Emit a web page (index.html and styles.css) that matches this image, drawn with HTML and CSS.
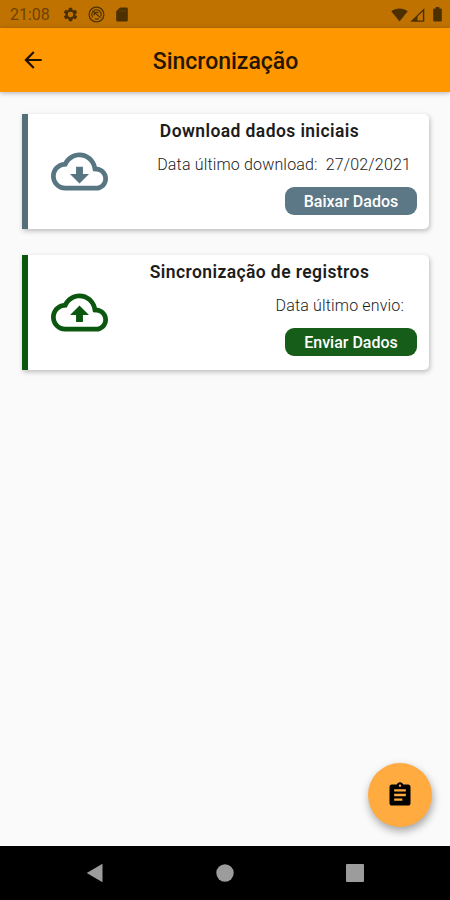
FILE: index.html
```html
<!DOCTYPE html>
<html lang="pt-BR">
<head>
  <meta charset="UTF-8">
  <meta name="viewport" content="width=device-width, initial-scale=1">
  <title>Sincronização</title>
  <link rel="stylesheet" href="styles.css">
</head>
<body>
  <!-- Status Bar -->
  <div class="status-bar">
    <span class="clock">21:08</span>
    <svg class="status-gear" width="17" height="17" viewBox="0 0 24 24"><path fill-rule="evenodd" d="M19.14 12.94c.04-.3.06-.61.06-.94s-.02-.64-.07-.94l2.03-1.58a.5.5 0 0 0 .12-.61l-1.92-3.32a.5.5 0 0 0-.59-.22l-2.39.96a7 7 0 0 0-1.62-.94l-.36-2.54A.48.48 0 0 0 13.92 2.4h-3.84a.48.48 0 0 0-.48.41l-.36 2.54a7 7 0 0 0-1.62.94l-2.39-.96a.5.5 0 0 0-.59.22L2.74 8.87a.48.48 0 0 0 .12.61l2.03 1.58a6 6 0 0 0 0 1.88l-2.03 1.58a.5.5 0 0 0-.12.61l1.92 3.32c.12.22.37.29.59.22l2.39-.96c.5.38 1.03.7 1.62.94l.36 2.54c.05.24.24.41.48.41h3.84c.24 0 .44-.17.48-.41l.36-2.54a7 7 0 0 0 1.62-.94l2.39.96c.22.08.47 0 .59-.22l1.92-3.32a.5.5 0 0 0-.12-.61zM12 15.8a3.8 3.8 0 1 1 0-7.6 3.8 3.8 0 0 1 0 7.6z"/></svg>
    <svg class="status-sync" width="17" height="17" viewBox="0 0 17 17"><g fill="none" stroke="#4d3000" stroke-width="1.2"><circle cx="8.5" cy="8.5" r="7.4"/><path d="M4.7 11.2a4.600 4.600 0 0 1-.3-4.900M5.800 4.700a4.700 4.700 0 0 1 6.900 5.900M11 12.500a4.700 4.700 0 0 1-4.300.3M4.300 4.800l8.200 6.800"/><path d="M6.300 9.400a2.300 2.300 0 0 1 4-2.200"/></g></svg>
    <svg class="status-sd" width="12" height="15" viewBox="0 0 12 15"><path d="M4 .5h6.5a1.300 1.300 0 0 1 1.300 1.300v11.400a1.300 1.300 0 0 1-1.300 1.300h-9A1.300 1.300 0 0 1 .2 13.200V4.300z"/><path d="M4 3v1.800M6.500 3v1.800M9 3v1.800" stroke="#7a4900" stroke-width=".8"/></svg>
    <div class="status-right">
      <svg width="17" height="14" viewBox="0 0 17 14"><path d="M.3 3.300C5 -.4 12 -.4 16.700 3.300L8.500 13.500z"/></svg>
      <svg width="15" height="14" viewBox="0 0 15 14"><path fill-rule="evenodd" d="M.3 13.800L14.300.2v13.600zM7.500 8.600v3.800h5.400V3.400z"/></svg>
      <svg class="status-battery" width="9" height="15" viewBox="0 0 9 15"><path d="M2.700 0h3.600v1.500h1.500q1 0 1 1v11q0 1-1 1H1.200q-1 0-1-1v-11q0-1 1-1h1.500z"/></svg>
    </div>
  </div>

  <!-- App Bar -->
  <div class="app-bar">
    <svg class="back" width="26" height="26" viewBox="0 0 24 24"><path d="M20 11H7.83l5.59-5.590L12 4l-8 8 8 8 1.410-1.410L7.830 13H20z"/></svg>
    <h1>Sincronização</h1>
  </div>

  <!-- Main Content -->
  <div class="main">
    <div class="card download">
      <svg class="cloud" width="57" height="57" viewBox="0 0 24 24"><path d="M19.35 10.04C18.67 6.59 15.64 4 12 4 9.11 4 6.6 5.64 5.35 8.04 2.34 8.36 0 10.91 0 14c0 3.31 2.69 6 6 6h13c2.76 0 5-2.24 5-5 0-2.64-2.05-4.78-4.65-4.96zM19 18H6c-2.21 0-4-1.79-4-4 0-2.05 1.53-3.76 3.56-3.97l1.07-.11.5-.95C8.08 7.14 9.94 6 12 6c2.62 0 4.88 1.86 5.39 4.43l.3 1.5 1.53.11c1.56.1 2.78 1.41 2.78 2.96 0 1.65-1.35 3-3 3z"/><path d="M8 13h2.55v-3h2.9v3H16l-4 4z"/></svg>
      <div class="card-body">
        <h2>Download dados iniciais</h2>
        <p>Data último download:&nbsp; 27/02/2021</p>
        <button>Baixar Dados</button>
      </div>
    </div>

    <div class="card upload">
      <svg class="cloud" width="57" height="57" viewBox="0 0 24 24"><path d="M19.35 10.04C18.67 6.59 15.64 4 12 4 9.11 4 6.6 5.64 5.35 8.04 2.34 8.36 0 10.91 0 14c0 3.31 2.69 6 6 6h13c2.76 0 5-2.24 5-5 0-2.64-2.05-4.78-4.65-4.96zM19 18H6c-2.21 0-4-1.79-4-4 0-2.05 1.53-3.76 3.56-3.97l1.07-.11.5-.95C8.08 7.14 9.94 6 12 6c2.62 0 4.88 1.86 5.39 4.43l.3 1.5 1.53.11c1.56.1 2.78 1.41 2.78 2.96 0 1.65-1.35 3-3 3z"/><path d="M8 13h2.55v3h2.9v-3H16l-4-4z"/></svg>
      <div class="card-body">
        <h2>Sincronização de registros</h2>
        <p>Data último envio:</p>
        <button>Enviar Dados</button>
      </div>
    </div>
  </div>

  <!-- Floating Button -->
  <button class="fab" aria-label="Registros">
    <svg width="28" height="28" viewBox="0 0 24 24"><path d="M19 3h-4.18C14.4 1.84 13.3 1 12 1s-2.4.84-2.82 2H5c-1.1 0-2 .9-2 2v14c0 1.1.9 2 2 2h14c1.1 0 2-.9 2-2V5c0-1.1-.9-2-2-2zm-7 0c.55 0 1 .45 1 1s-.45 1-1 1-1-.45-1-1 .45-1 1-1zm2 14H7v-2h7v2zm3-4H7v-2h10v2zm0-4H7V7h10v2z"/></svg>
  </button>

  <!-- Navigation Bar -->
  <div class="nav-bar">
    <svg width="18" height="20" viewBox="0 0 18 20"><path d="M16.5.7v18.6L.7 10z"/></svg>
    <svg width="18" height="18" viewBox="0 0 18 18"><circle cx="9" cy="9" r="8.700"/></svg>
    <svg width="18" height="18" viewBox="0 0 18 18"><rect width="18" height="18" rx="1"/></svg>
  </div>
</body>
</html>
```
FILE: styles.css
```css
/* General Reset */
* {
  margin: 0;
  padding: 0;
  box-sizing: border-box;
}

body {
  width: 450px;
  height: 900px;
  display: flex;
  flex-direction: column;
  overflow: hidden;
  position: relative;
  font-family: Roboto, sans-serif;
  background-color: #fafafa;
  color: #1c1c1c;
}

svg {
  display: block;
  flex-shrink: 0;
}

/* Status Bar */
.status-bar {
  height: 28px;
  display: flex;
  align-items: center;
  padding: 1px 8px 0 10px;
  background-color: #bf7200;
  color: #6e4200;
  fill: #4d3000;
}

.clock {
  width: 52px;
  font-size: 16px;
}

.status-sync {
  margin-left: 9px;
}

.status-sd {
  margin-left: 11px;
}

.status-right {
  display: flex;
  align-items: center;
  gap: 2px;
  margin-left: auto;
}

.status-battery {
  margin-left: 6px;
}

/* App Bar */
.app-bar {
  height: 64px;
  display: flex;
  align-items: center;
  justify-content: center;
  padding-right: 20px;
  background-color: #ff9800;
  box-shadow: 0 1px 5px rgba(0, 0, 0, 0.3);
}

.app-bar .back {
  margin-left: 20px;
  fill: #1d1100;
}

.app-bar h1 {
  flex: 1;
  padding-right: 25px; /* Keeps the title centered on the screen */
  margin-top: 2px;
  text-align: center;
  font-size: 23px;
  font-weight: 500;
  color: #261600;
}

/* Main Content */
.main {
  flex: 1;
  display: flex;
  flex-direction: column;
  gap: 26px;
  padding: 22px 21px 0 22px;
}

/* Cards */
.card {
  height: 115px;
  display: flex;
  align-items: center;
  border-left: 6px solid;
  border-radius: 0 5px 5px 0;
  background-color: white;
  box-shadow: 1px 2px 5px rgba(0, 0, 0, 0.25);
}

.download {
  border-color: #546e7a;
  fill: #587582;
}

.upload {
  border-color: #0b570f;
  fill: #0b570f;
}

.cloud {
  margin-left: 23px;
}

.card-body {
  flex: 1;
  height: 100%;
  display: flex;
  flex-direction: column;
  align-items: flex-end;
  padding: 6px 12px 0 0;
}

.card h2 {
  width: 316px;
  margin-right: -12px;
  padding-right: 23px;
  text-align: center;
  font-size: 17.5px;
  font-weight: 600;
  letter-spacing: 0.41px;
  line-height: 22px;
  white-space: nowrap;
}

.card p {
  margin-top: 12px;
  margin-right: 6px;
  font-size: 16px;
  font-weight: 300;
  letter-spacing: 0.16px;
  line-height: 22px;
  white-space: nowrap;
}

.upload p {
  margin-right: 13px;
}

.card button {
  width: 132px;
  height: 28px;
  margin-top: 11px;
  border: none;
  border-radius: 9px;
  background-color: #5c7886;
  color: white;
  font-family: inherit;
  font-size: 16px;
  font-weight: 500;
}

.upload button {
  background-color: #155d18;
}

/* Floating Button */
.fab {
  position: absolute;
  right: 18px;
  bottom: 73px;
  width: 64px;
  height: 64px;
  display: flex;
  align-items: center;
  justify-content: center;
  border: none;
  border-radius: 50%;
  background-color: #ffab40;
  box-shadow: 1px 4px 8px rgba(0, 0, 0, 0.35);
}

/* Navigation Bar */
.nav-bar {
  height: 54px;
  display: flex;
  align-items: center;
  justify-content: space-between;
  padding: 0 86px;
  background-color: black;
  fill: #9c9c9c;
}
```
